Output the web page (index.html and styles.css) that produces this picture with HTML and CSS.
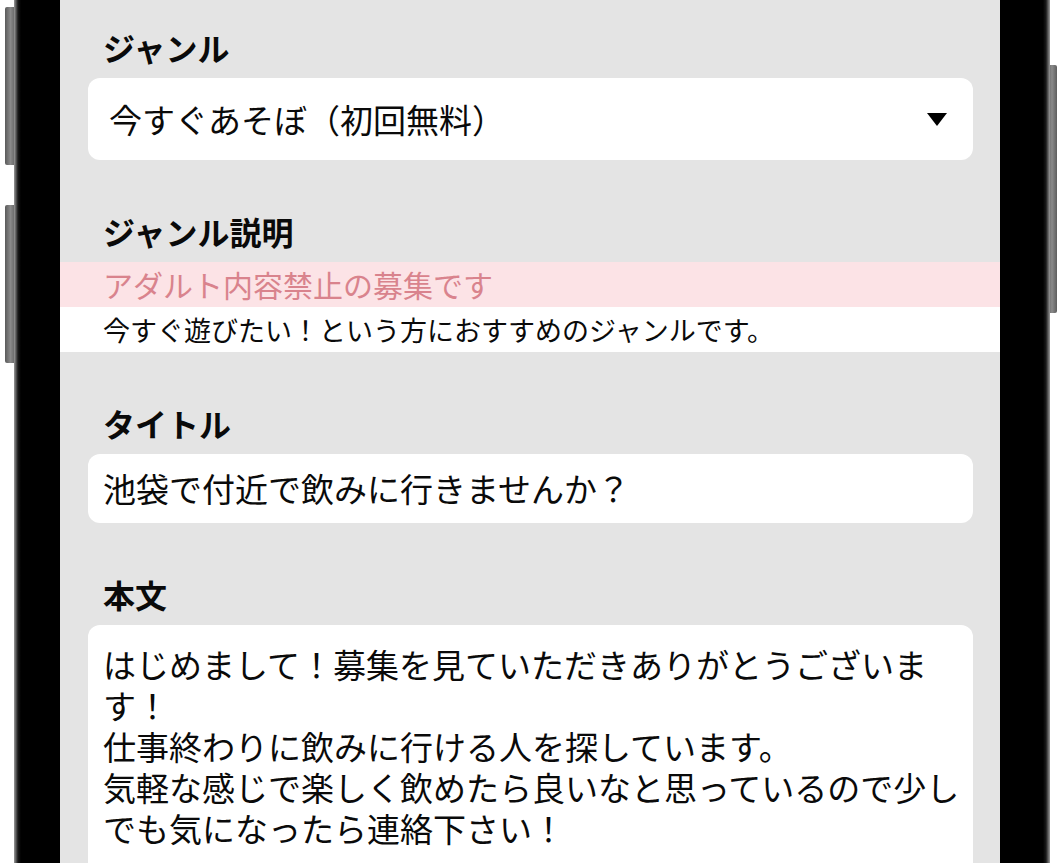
FILE: index.html
```html
<!DOCTYPE html>
<html lang="ja">
<head>
    <meta charset="UTF-8">
    <meta name="viewport" content="width=device-width, initial-scale=1.0">
    <title>募集を作成</title>
    <link rel="stylesheet" href="styles.css">
</head>
<body>

<div class="device">
    <span class="sideKey keyLeftTop"></span>
    <span class="sideKey keyLeftBottom"></span>
    <span class="sideKey keyRight"></span>

    <div class="bezel">
        <div class="screen">
            <form class="postForm">
                <div class="field">
                    <label for="genre">ジャンル</label>
                    <div class="selectBox">
                        <span id="genre">今すぐあそぼ（初回無料）</span>
                        <svg class="caret" width="20" height="13" viewBox="0 0 20 13">
                            <polygon points="0,0 20,0 10,13" fill="#000"/>
                        </svg>
                    </div>
                </div>

                <div class="field">
                    <label>ジャンル説明</label>
                    <div class="notice">アダルト内容禁止の募集です</div>
                    <div class="genreDesc">今すぐ遊びたい！という方におすすめのジャンルです。</div>
                </div>

                <div class="field">
                    <label for="title">タイトル</label>
                    <div class="textBox" id="title">池袋で付近で飲みに行きませんか？</div>
                </div>

                <div class="field">
                    <label for="body">本文</label>
                    <div class="textArea" id="body">はじめまして！募集を見ていただきありがとうございます！
仕事終わりに飲みに行ける人を探しています。
気軽な感じで楽しく飲めたら良いなと思っているので少しでも気になったら連絡下さい！</div>
                </div>
            </form>
        </div>
    </div>
</div>

</body>
</html>
```

FILE: styles.css
```css
body {
    font-family: "Noto Sans CJK JP", "Noto Sans", sans-serif;
    margin: 0;
    padding: 0;
    color: #0a0a0a;
    background-color: #fff;
    overflow: hidden;
}

.device {
    position: relative;
    height: 863px;
    overflow: hidden;
}

.sideKey {
    position: absolute;
    width: 11px;
    border-radius: 2px;
    background: linear-gradient(to right, #5a5a5a, #8a8a8a 50%, #5e5e5e);
}

.keyLeftTop {
    left: 5px;
    top: 7px;
    height: 158px;
}

.keyLeftBottom {
    left: 5px;
    top: 205px;
    height: 158px;
}

.keyRight {
    left: 1047px;
    top: 65px;
    height: 248px;
    width: 10px;
}

.bezel {
    position: relative;
    margin-left: 14px;
    width: 1036px;
    height: 100%;
    box-sizing: border-box;
    padding: 0 50px 0 46px;
    background: linear-gradient(to right, #9a9a9a 0, #1a1a1a 4px, #000 7px, #000 calc(100% - 7px), #1a1a1a calc(100% - 4px), #9a9a9a 100%);
}

.screen {
    background-color: #e4e4e4;
    height: 100%;
    padding-top: 27px;
    box-sizing: border-box;
}

.field {
    margin-bottom: 51px;
}

.field label {
    display: block;
    padding-left: 43px;
    margin-bottom: 11px;
    font-size: 32px;
    font-weight: 700;
    line-height: 40px;
}

.selectBox, .textBox, .textArea {
    margin: 0 27px 0 28px;
    background-color: #fff;
    border-radius: 12px;
    font-size: 33px;
}

.selectBox {
    height: 82px;
    display: flex;
    align-items: center;
    justify-content: space-between;
    padding: 0 26px 0 21px;
}

.caret {
    display: block;
}

.notice {
    background-color: #fce3e6;
    color: #d9838d;
    font-size: 30px;
    line-height: 45px;
    padding-left: 43px;
}

.genreDesc {
    background-color: #fff;
    font-size: 27px;
    line-height: 45px;
    padding-left: 43px;
}

.textBox {
    line-height: 69px;
    padding: 0 15px;
}

.textArea {
    padding: 19px 10px 60px 15px;
    line-height: 41px;
    white-space: pre-wrap;
    line-break: strict;
}
```
